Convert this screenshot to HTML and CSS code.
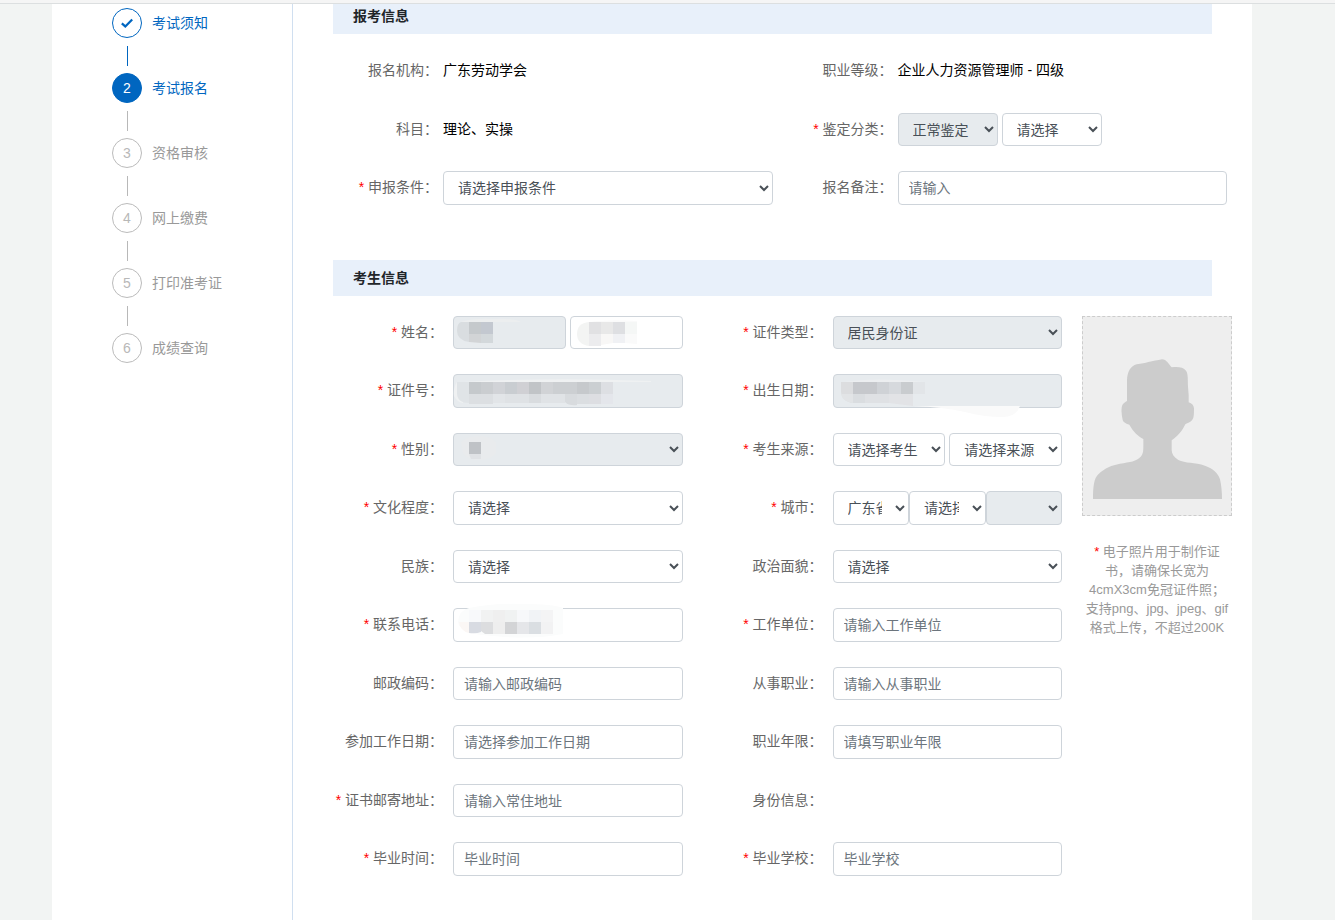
FILE: index.html
```html
<!DOCTYPE html>
<html lang="zh-CN">
<head>
<meta charset="utf-8">
<title>考试报名</title>
<link rel="stylesheet" href="styles.css">
</head>
<body>
<div class="topbar"></div>
<div class="page">
  <nav class="sidebar" aria-label="报名步骤">
    <ol class="steps">
      <li class="step done"><span class="dot"><svg width="14" height="14" viewBox="0 0 14 14"><path d="M1.8 7.4 L5.3 10.4 L12.2 3.4" fill="none" stroke="currentColor" stroke-width="2.2"/></svg></span><span>考试须知</span></li>
      <li class="step active"><span class="dot">2</span><span>考试报名</span></li>
      <li class="step"><span class="dot">3</span><span>资格审核</span></li>
      <li class="step"><span class="dot">4</span><span>网上缴费</span></li>
      <li class="step"><span class="dot">5</span><span>打印准考证</span></li>
      <li class="step"><span class="dot">6</span><span>成绩查询</span></li>
    </ol>
  </nav>
  <main class="main">
    <section>
      <h2 class="title">报考信息</h2>
      <div class="grid exam">
        <div class="cell"><span class="label">报名机构：</span><span class="value">广东劳动学会</span></div>
        <div class="cell"><span class="label">职业等级：</span><span class="value">企业人力资源管理师 - 四级</span></div>
        <div class="cell"><span class="label">科目：</span><span class="value">理论、实操</span></div>
        <div class="cell"><label class="label" for="kind"><i>*</i> 鉴定分类：</label>
          <div class="field short"><select id="kind" disabled><option>正常鉴定</option></select><select aria-label="鉴定子类"><option>请选择</option></select></div></div>
        <div class="cell"><label class="label" for="cond"><i>*</i> 申报条件：</label>
          <div class="field"><select id="cond"><option>请选择申报条件</option></select></div></div>
        <div class="cell"><label class="label" for="note">报名备注：</label>
          <div class="field"><input id="note" type="text" placeholder="请输入"></div></div>
      </div>
    </section>
    <section class="candidate-section">
      <h2 class="title">考生信息</h2>
      <div class="split">
        <div class="grid candidate">
          <div class="cell"><label class="label" for="name"><i>*</i> 姓名：</label>
            <div class="field"><input id="name" type="text" disabled><input type="text" aria-label="姓名拼音">
              <svg class="mask" width="230" height="34" viewBox="0 0 230 34">
                <path d="M8 6Q20 2 40 3Q62 2 68 6Z" fill="#eceeef"/>
                <path d="M16 6V26Q4 24 4 15Q4 7 8 6Z" fill="#d9dde0"/>
                <path d="M16 6h12v12h-12z" fill="#c5c9cc"/><path d="M28 6h12v12h-12z" fill="#c3c8d0"/>
                <path d="M16 18h12v9l-12-1z" fill="#d2d4d6"/><path d="M28 18h12v9h-12z" fill="#d3d8db"/>
                <path d="M136 6Q155 3 184 5L184 7Z" fill="#fafafa"/>
                <path d="M136 6V30Q124 28 124 18Q124 7 136 6Z" fill="#f3f4f3"/>
                <path d="M136 6h12v12h-12z" fill="#e1e1e3"/><path d="M148 6h12v12h-12z" fill="#e8e8e8"/><path d="M160 6h12v12h-12z" fill="#dedfe2"/><path d="M172 6h12v12h-12z" fill="#f5f7f6"/>
                <path d="M136 18h12v12h-12z" fill="#ececee"/><path d="M148 18h12v9l-12 2z" fill="#f8f7f6"/><path d="M160 18h12v9h-12z" fill="#f0f1f4"/><path d="M172 18h12v10l-12-1z" fill="#fafafa"/>
              </svg></div></div>
          <div class="cell"><label class="label" for="idtype"><i>*</i> 证件类型：</label>
            <div class="field"><select id="idtype" disabled><option>居民身份证</option></select></div></div>
          <div class="cell"><label class="label" for="idno"><i>*</i> 证件号：</label>
            <div class="field"><input id="idno" type="text" disabled>
              <svg class="mask" width="230" height="34" viewBox="0 0 230 34">
                <path d="M10 8Q100 3 198 7V8ZM4 8Q0 14 1 22Q4 28 10 29V8Z" fill="#eff1f2"/>
                <path d="M4 8h12v21q-12 0-12-10z" fill="#e0e4e7"/>
                <path d="M16 8h12v12h-12z" fill="#c5c9cc"/><path d="M28 8h12v12h-12z" fill="#cacdd0"/><path d="M40 8h12v12h-12z" fill="#d1d3d7"/><path d="M52 8h12v12h-12z" fill="#c9cdd1"/><path d="M64 8h12v12h-12z" fill="#d0d0d4"/><path d="M76 8h12v12h-12z" fill="#c1c4c7"/><path d="M88 8h12v12h-12z" fill="#d1d3d6"/><path d="M100 8h24v12h-24z" fill="#cccfd2"/><path d="M124 8h12v12h-12z" fill="#c6c9cc"/><path d="M136 8h12v12h-12z" fill="#cbcfd2"/><path d="M148 8h12v12h-12z" fill="#dddfe3"/>
                <path d="M16 20h24v10h-24z" fill="#dcdfe2"/><path d="M40 20h12v9h-12z" fill="#e2e5e8"/><path d="M52 20h24v9h-24z" fill="#dfe2e5"/><path d="M76 20h12v9h-12z" fill="#d9dcdf"/><path d="M88 20h24v9h-24z" fill="#e0e3e6"/><path d="M112 20h12v11q-8 1-12-3z" fill="#d8dbde"/><path d="M124 20h12v10h-12z" fill="#dbdee1"/><path d="M136 20h12v10h-12z" fill="#dddee2"/><path d="M148 20h12v10h-12z" fill="#e4e6eb"/>
              </svg></div></div>
          <div class="cell"><label class="label" for="birth"><i>*</i> 出生日期：</label>
            <div class="field"><input id="birth" type="text" disabled>
              <svg class="mask" width="230" height="44" viewBox="0 0 230 44">
                <path d="M12 8Q40 3 92 8Z" fill="#eceef0"/>
                <path d="M8 8h12v21q-12-2-12-12z" fill="#dcdddf"/><path d="M20 8h24v12h-24z" fill="#c6c8cc"/><path d="M44 8h12v12h-12z" fill="#cfd2d6"/><path d="M56 8h12v12h-12z" fill="#d6d9dd"/><path d="M68 8h12v12h-12z" fill="#c9cccf"/><path d="M80 8h12v12h-12z" fill="#e2e5e8"/>
                <path d="M8 20h12v9q-10-1-12-9z" fill="#e2e4e6"/><path d="M20 20h12v9h-12z" fill="#dadde0"/><path d="M32 20h24v9h-24z" fill="#dfe1e4"/><path d="M56 20h24v12l-24-3z" fill="#e2e3e6"/>
                <path d="M80 32H187Q183 43 170 43Q150 43 132 38Q110 33 80 32Z" fill="#fafafa"/>
              </svg></div></div>
          <div class="cell"><label class="label" for="sex"><i>*</i> 性别：</label>
            <div class="field"><select id="sex" disabled><option></option></select>
              <svg class="mask" width="230" height="34" viewBox="0 0 230 34">
                <path d="M8 9Q15 3 26 3Q38 3 43 9V20Q38 27 26 27Q14 27 10 20Z" fill="#e9ebed"/>
                <path d="M16 9h12v12h-12z" fill="#bfc2c6"/><path d="M16 21h12v5h-10z" fill="#e0e2e5"/>
              </svg></div></div>
          <div class="cell"><label class="label" for="source"><i>*</i> 考生来源：</label>
            <div class="field"><select id="source"><option>请选择考生来源</option></select><select aria-label="来源明细"><option>请选择来源明细</option></select></div></div>
          <div class="cell"><label class="label" for="edu"><i>*</i> 文化程度：</label>
            <div class="field"><select id="edu"><option>请选择</option></select></div></div>
          <div class="cell"><label class="label" for="province"><i>*</i> 城市：</label>
            <div class="field joined"><select id="province"><option>广东省</option></select><select aria-label="市"><option>请选择</option></select><select aria-label="区" disabled><option></option></select></div></div>
          <div class="cell"><label class="label" for="ethnic">民族：</label>
            <div class="field"><select id="ethnic"><option>请选择</option></select></div></div>
          <div class="cell"><label class="label" for="politics">政治面貌：</label>
            <div class="field"><select id="politics"><option>请选择</option></select></div></div>
          <div class="cell"><label class="label" for="phone"><i>*</i> 联系电话：</label>
            <div class="field"><input id="phone" type="tel">
              <svg class="mask" width="230" height="34" viewBox="0 0 230 34">
                <path d="M16 0Q40-5 70-4Q100-4 110 0V26Q80 32 40 28Q6 26 5 14Q6 2 16 0Z" fill="#fbfcfc"/>
                <path d="M6 14h10v11q-9-2-10-11z" fill="#fbf7f5"/>
                <path d="M16 2h12v12h-12z" fill="#f8f9fb"/><path d="M28 2h12v12h-12z" fill="#f1f2f2"/><path d="M40 2h12v12h-12z" fill="#efefef"/><path d="M52 2h12v12h-12z" fill="#f0f2f2"/><path d="M64 2h12v12h-12z" fill="#f7f8fa"/><path d="M76 2h12v12h-12z" fill="#f1f3f6"/><path d="M88 2h12v12h-12z" fill="#f4f4f5"/>
                <path d="M16 14h12v10q-5 2-12 1z" fill="#d8dbe2"/><path d="M28 14h12v12h-8l-4-3z" fill="#dcdddf"/><path d="M40 14h12v12h-12z" fill="#eee"/><path d="M52 14h12v12h-12z" fill="#d3d4d6"/><path d="M64 14h12v12h-12z" fill="#e5e6e9"/><path d="M76 14h12v12h-12z" fill="#dadee2"/><path d="M88 14h12v12h-12z" fill="#f2f2f3"/>
              </svg></div></div>
          <div class="cell"><label class="label" for="company"><i>*</i> 工作单位：</label>
            <div class="field"><input id="company" type="text" placeholder="请输入工作单位"></div></div>
          <div class="cell"><label class="label" for="zip">邮政编码：</label>
            <div class="field"><input id="zip" type="text" placeholder="请输入邮政编码"></div></div>
          <div class="cell"><label class="label" for="job">从事职业：</label>
            <div class="field"><input id="job" type="text" placeholder="请输入从事职业"></div></div>
          <div class="cell"><label class="label" for="workdate">参加工作日期：</label>
            <div class="field"><input id="workdate" type="text" placeholder="请选择参加工作日期"></div></div>
          <div class="cell"><label class="label" for="years">职业年限：</label>
            <div class="field"><input id="years" type="text" placeholder="请填写职业年限"></div></div>
          <div class="cell"><label class="label" for="address"><i>*</i> 证书邮寄地址：</label>
            <div class="field"><input id="address" type="text" placeholder="请输入常住地址"></div></div>
          <div class="cell"><span class="label">身份信息：</span></div>
          <div class="cell"><label class="label" for="graddate"><i>*</i> 毕业时间：</label>
            <div class="field"><input id="graddate" type="text" placeholder="毕业时间"></div></div>
          <div class="cell"><label class="label" for="school"><i>*</i> 毕业学校：</label>
            <div class="field"><input id="school" type="text" placeholder="毕业学校"></div></div>
        </div>
        <aside class="photo">
          <button type="button" class="photo-box" aria-label="上传电子照片">
            <svg viewBox="39 51 444 594"><path fill="#ccc" d="M69 597C69 560 72 535 85 523C105 503 125 496 150 491C180 486 200 484 212 470C219 461 220 455 220 440V417C205 409 190 396 178 374C165 370 160 366 158 360C154 340 153 325 157 315C160 309 166 306 171 303V240C172 215 182 198 200 193C215 190 225 190 235 186C250 183 262 181 276 178C290 178 295 192 305 202C320 200 340 200 348 212C355 222 353 240 354 260L356 285V307C366 310 371 316 372 325C372 340 372 355 366 361C360 368 350 369 346 373C337 392 322 410 305 421V450C305 462 312 472 325 480C345 490 375 487 405 497C430 506 445 520 450 538C454 555 456 575 456 597Z"/></svg>
          </button>
          <p class="hint"><i>*</i> 电子照片用于制作证<br>书，请确保长宽为<br>4cmX3cm免冠证件照；<br>支持png、jpg、jpeg、gif<br>格式上传，不超过200K</p>
        </aside>
      </div>
    </section>
  </main>
</div>
</body>
</html>
```
FILE: styles.css
```css
* {
  box-sizing: border-box;
}

body {
  margin: 0;
  background: #f2f4f3;
  color: #212529;
  font: 14px/20px "Liberation Sans", "Noto Sans CJK SC", sans-serif;
}

i {
  color: #f00;
  font-style: normal;
}

.topbar {
  position: relative;
  z-index: 1;
  height: 4px;
  background: #f5f5f5;
  border-bottom: 1px solid #dcdfe0;
}

.page {
  display: flex;
  min-height: calc(100vh - 4px);
  margin: 0 83px 0 52px;
  background: #fff;
}

/* Step list */
.sidebar {
  flex: 0 0 241px;
  padding: 4px 0 0 60px;
  border-right: 1px solid #d0dff0;
}

.steps {
  margin: 0;
  padding: 0;
  list-style: none;
}

.step {
  display: grid;
  grid-template-columns: 30px 1fr;
  column-gap: 10px;
  align-items: center;
  color: #999;
}

.step:not(:last-child)::after {
  content: "";
  width: 1px;
  height: 20px;
  margin: 8px 0 7px 15px;
  background: #b8b8b8;
}

.dot {
  display: flex;
  align-items: center;
  justify-content: center;
  height: 30px;
  border: 1px solid #bbb;
  border-radius: 50%;
  color: #b8b8b8;
}

.done,
.active {
  color: #0066c0;
}

.done .dot {
  border-color: #0066c0;
  color: #0066c0;
}

.step.done::after {
  background: #0066c0;
}

.active .dot {
  border-color: #0066c0;
  background: #0066c0;
  color: #fff;
}

/* Form */
.main {
  flex: 1;
  min-width: 0;
  margin-top: -6px;
  padding: 0 40px;
}

.title {
  margin: 0 0 20px;
  padding: 0 20px;
  background: #e8f0fa;
  font-size: 14px;
  line-height: 36px;
}

.candidate-section {
  margin-top: 55px;
}

.grid {
  display: grid;
  grid-template-columns: 1fr 1fr;
  row-gap: 25px;
}

.exam {
  grid-auto-rows: 34px 33px;
  margin: 0 -15px;
}

.split {
  display: flex;
  align-items: flex-start;
  gap: 5px;
  margin: 0 -20px 0 -15px;
}

.candidate {
  flex: 1;
  grid-auto-rows: 33px 34px;
}

.cell {
  display: grid;
  grid-template-columns: 125px minmax(0, 1fr);
}

.candidate .cell {
  grid-template-columns: 135px minmax(0, 1fr);
  padding-right: 15px;
}

.label,
.value {
  line-height: 32px;
  white-space: nowrap;
}

.label {
  padding-right: 12px;
  color: #666;
  font-feature-settings: "halt";
  text-align: right;
}

.candidate .label {
  padding-right: 17px;
}

.value {
  color: #000;
}

.field {
  position: relative;
  display: flex;
  gap: 4px;
}

.joined {
  gap: 0;
}

.field input,
.field select {
  flex: 1;
  width: 100%;
  min-width: 0;
  padding: 0 10px;
  border: 1px solid #ced4da;
  border-radius: 4px;
  background-color: #fff;
  color: #495057;
  font: inherit;
}

.short select {
  flex: 0 0 100px;
}

.field input::placeholder {
  color: #6c757d;
}

.field input:disabled,
.field select:disabled {
  background-color: #e7ebee;
  opacity: 1;
}

.mask {
  position: absolute;
  top: 0;
  left: 0;
  overflow: visible;
  pointer-events: none;
}

/* Photo upload */
.photo {
  flex: 0 0 150px;
}

.photo-box {
  display: block;
  width: 150px;
  height: 200px;
  padding: 0;
  border: 1px dashed #ccc;
  background: #eee;
}

.photo-box svg {
  display: block;
}

.hint {
  margin: 26px 0 0;
  color: #999;
  font-size: 13px;
  line-height: 19px;
  text-align: center;
  white-space: nowrap;
}
```
